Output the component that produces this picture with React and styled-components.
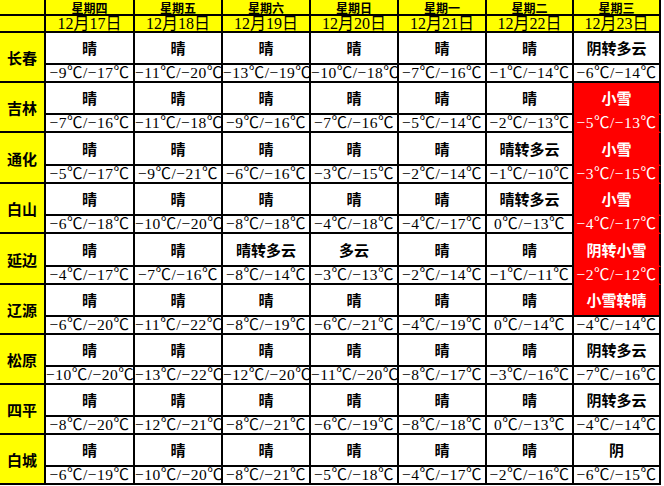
import React from "react";
import styled, { createGlobalStyle } from "styled-components";

const Global = createGlobalStyle`
  html, body { margin: 0; padding: 0; background: #ffffff; }
  body { width: 664px; height: 486px; overflow: hidden; }
`;

const YELLOW = "#ffff00";
const RED = "#ff0000";
const LINE = "#000000";

const Table = styled.table`
  border-collapse: separate;
  border-spacing: 0;
  table-layout: fixed;
  width: 661px;
`;

const Cell = styled.td`
  box-sizing: border-box;
  padding: 0;
  border-right: 2px solid ${LINE};
  border-bottom: 2px solid ${(p) => (p.$redBelow ? RED : LINE)};
  text-align: center;
  vertical-align: middle;
  white-space: nowrap;
  overflow: visible;
`;

const DayCell = styled(Cell)`
  height: 16px;
  background: ${YELLOW};
  color: #000;
  font-family: "Noto Sans CJK SC", sans-serif;
  font-weight: 700;
  font-size: 12px;
  line-height: 13px;
  padding-top: 1px;
`;

const DateCell = styled(Cell)`
  height: 17px;
  background: ${YELLOW};
  color: #000;
  font-family: "Liberation Serif", "Noto Sans CJK SC", serif;
  font-size: 16px;
  line-height: 15px;
`;

const CityCell = styled(Cell)`
  background: ${YELLOW};
  color: #000;
  font-family: "Noto Sans CJK SC", sans-serif;
  font-weight: 700;
  font-size: 15px;
  line-height: 18px;
  padding-top: 2px;
`;

const WeatherCell = styled(Cell)`
  height: ${(p) => (p.$tall ? 33 : 32)}px;
  background: ${(p) => (p.$alert ? RED : "#ffffff")};
  color: ${(p) => (p.$alert ? "#ffffff" : "#000000")};
  font-family: "Noto Sans CJK SC", sans-serif;
  font-weight: 700;
  font-size: 15px;
  line-height: 18px;
`;

const TempCell = styled(Cell)`
  height: 18px;
  background: ${(p) => (p.$alert ? RED : "#ffffff")};
  color: ${(p) => (p.$alert ? "#ffffff" : "#000000")};
  font-family: "Liberation Serif", "Noto Sans CJK SC", serif;
  font-size: 15.5px;
  line-height: 16px;
  letter-spacing: 0.5px;
`;

const days = [
  ["星期四", "12月17日"],
  ["星期五", "12月18日"],
  ["星期六", "12月19日"],
  ["星期日", "12月20日"],
  ["星期一", "12月21日"],
  ["星期二", "12月22日"],
  ["星期三", "12月23日"],
];

const colWidths = [46, 89, 88, 88, 88, 88, 87, 87];

const cities = [
  {
    name: "长春",
    w: ["晴", "晴", "晴", "晴", "晴", "晴", "阴转多云"],
    t: [[-9, -17], [-11, -20], [-13, -19], [-10, -18], [-7, -16], [-1, -14], [-6, -14]],
    wr: [],
    tr: [],
  },
  {
    name: "吉林",
    w: ["晴", "晴", "晴", "晴", "晴", "晴", "小雪"],
    t: [[-7, -16], [-11, -18], [-9, -16], [-7, -16], [-5, -14], [-2, -13], [-5, -13]],
    wr: [6],
    tr: [6],
  },
  {
    name: "通化",
    tall: true,
    w: ["晴", "晴", "晴", "晴", "晴", "晴转多云", "小雪"],
    t: [[-5, -17], [-9, -21], [-6, -16], [-3, -15], [-2, -14], [-1, -10], [-3, -15]],
    wr: [6],
    tr: [6],
  },
  {
    name: "白山",
    w: ["晴", "晴", "晴", "晴", "晴", "晴转多云", "小雪"],
    t: [[-6, -18], [-10, -20], [-8, -18], [-4, -18], [-4, -17], [0, -13], [-4, -17]],
    wr: [6],
    tr: [6],
  },
  {
    name: "延边",
    tall: true,
    w: ["晴", "晴", "晴转多云", "多云", "晴", "晴", "阴转小雪"],
    t: [[-4, -17], [-7, -16], [-8, -14], [-3, -13], [-2, -14], [-1, -11], [-2, -12]],
    wr: [6],
    tr: [6],
  },
  {
    name: "辽源",
    w: ["晴", "晴", "晴", "晴", "晴", "晴", "小雪转晴"],
    t: [[-6, -20], [-11, -22], [-8, -19], [-6, -21], [-4, -19], [0, -14], [-4, -14]],
    wr: [6],
    tr: [],
  },
  {
    name: "松原",
    w: ["晴", "晴", "晴", "晴", "晴", "晴", "阴转多云"],
    t: [[-10, -20], [-13, -22], [-12, -20], [-11, -20], [-8, -17], [-3, -16], [-7, -16]],
    wr: [],
    tr: [],
  },
  {
    name: "四平",
    w: ["晴", "晴", "晴", "晴", "晴", "晴", "阴转多云"],
    t: [[-8, -20], [-12, -21], [-8, -21], [-6, -19], [-8, -18], [0, -13], [-4, -14]],
    wr: [],
    tr: [],
  },
  {
    name: "白城",
    w: ["晴", "晴", "晴", "晴", "晴", "晴", "阴"],
    t: [[-6, -19], [-10, -20], [-8, -21], [-5, -18], [-4, -17], [-2, -16], [-6, -15]],
    wr: [],
    tr: [],
  },
];

const fmt = (n) => (n < 0 ? "\u2212" + Math.abs(n) : String(n)) + "℃";

export default function App() {
  return (
    <>
      <Global />
      <Table>
        <colgroup>
          {colWidths.map((w, i) => (
            <col key={i} style={{ width: w }} />
          ))}
        </colgroup>
        <tbody>
          <tr>
            <DayCell />
            {days.map(([d]) => (
              <DayCell key={d}>{d}</DayCell>
            ))}
          </tr>
          <tr>
            <DateCell />
            {days.map(([d, dt]) => (
              <DateCell key={dt}>{dt}</DateCell>
            ))}
          </tr>
          {cities.map((c, ci) => {
            const next = cities[ci + 1];
            return (
              <React.Fragment key={c.name}>
                <tr>
                  <CityCell rowSpan={2}>{c.name}</CityCell>
                  {c.w.map((w, i) => {
                    const red = c.wr.includes(i);
                    return (
                      <WeatherCell
                        key={i}
                        $tall={c.tall}
                        $alert={red}
                        $redBelow={red && c.tr.includes(i)}
                      >
                        {w}
                      </WeatherCell>
                    );
                  })}
                </tr>
                <tr>
                  {c.t.map(([hi, lo], i) => {
                    const red = c.tr.includes(i);
                    return (
                      <TempCell
                        key={i}
                        $alert={red}
                        $redBelow={red && next && next.wr.includes(i)}
                      >
                        {fmt(hi)}/{fmt(lo)}
                      </TempCell>
                    );
                  })}
                </tr>
              </React.Fragment>
            );
          })}
        </tbody>
      </Table>
    </>
  );
}
